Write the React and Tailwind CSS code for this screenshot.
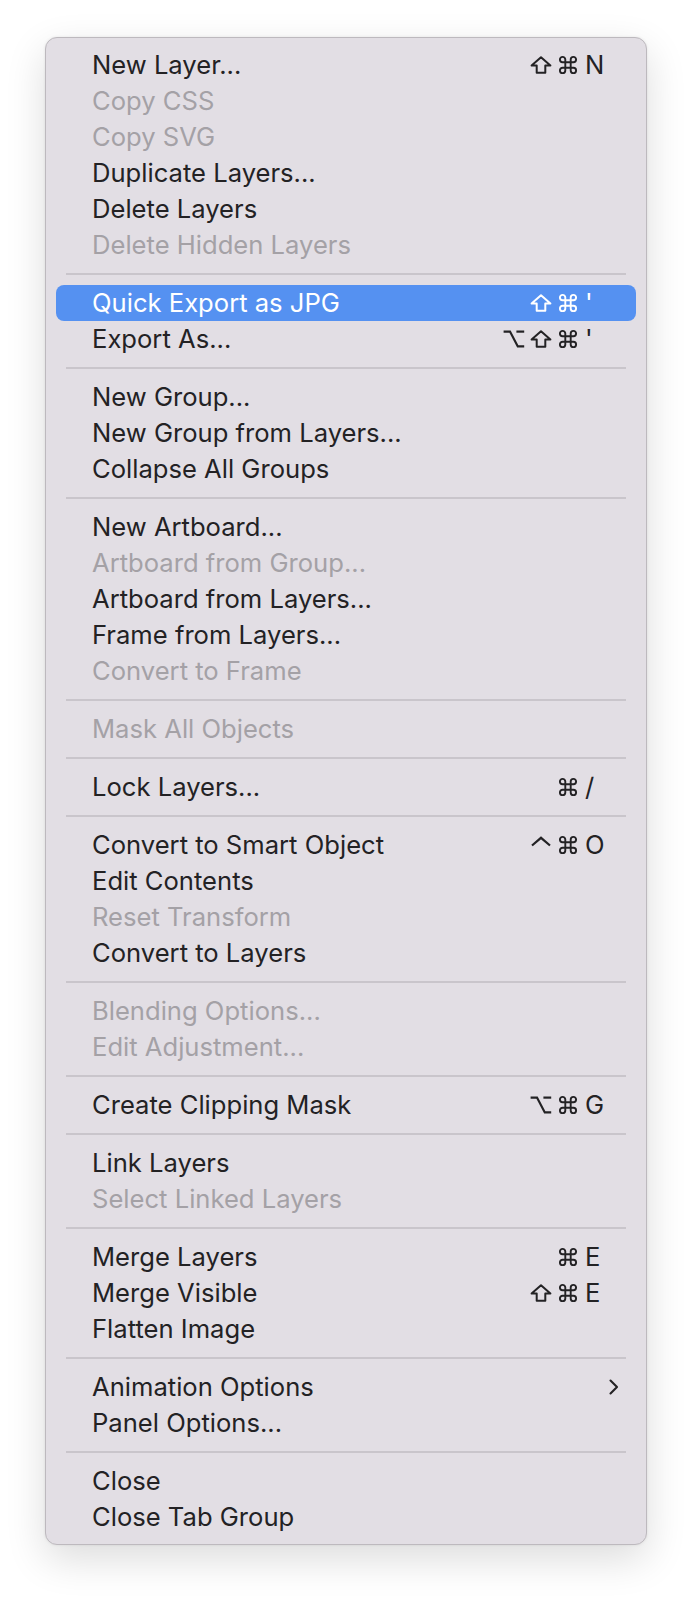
import React from "react";

function Shift() {
  return (
    <svg width="22" height="18" viewBox="0 0 22 18" fill="none" stroke="currentColor" strokeWidth="2" strokeLinejoin="round" className="overflow-visible">
      <path d="M11 1.3 L1.6 9.5 H6.7 V16.8 H15.3 V9.5 H20.4 Z" />
    </svg>
  );
}
function Cmd() {
  return (
    <svg width="22" height="18" viewBox="0 2 24 20" fill="none" stroke="currentColor" strokeWidth="2.1" className="overflow-visible">
      <path d="M15 6v12a3 3 0 1 0 3-3H6a3 3 0 1 0 3 3V6a3 3 0 1 0-3 3h12a3 3 0 1 0-3-3" />
    </svg>
  );
}
function Opt() {
  return (
    <svg width="22" height="18" viewBox="0 0 22 18" fill="none" stroke="currentColor" strokeWidth="2.2" className="overflow-visible">
      <path d="M0.6 1.6 H7 L14.8 16.4 H21.2" />
      <path d="M13.4 1.6 H21.2" />
    </svg>
  );
}
function Ctrl() {
  return (
    <svg width="22" height="18" viewBox="0 0 22 18" fill="none" stroke="currentColor" strokeWidth="2.2" className="overflow-visible">
      <path d="M2 9.5 L11 1.8 L20 9.5" />
    </svg>
  );
}
function Chevron() {
  return (
    <svg width="10" height="16" viewBox="0 0 10 16" fill="none" stroke="currentColor" strokeWidth="2.1" strokeLinecap="round" strokeLinejoin="round">
      <path d="M1.5 1.5 L8 8 L1.5 14.5" />
    </svg>
  );
}

const MOD = { shift: Shift, cmd: Cmd, opt: Opt, ctrl: Ctrl };

const groups = [
  [
    { t: "New Layer...", m: ["shift", "cmd"], k: "N" },
    { t: "Copy CSS", d: true },
    { t: "Copy SVG", d: true },
    { t: "Duplicate Layers..." },
    { t: "Delete Layers" },
    { t: "Delete Hidden Layers", d: true },
  ],
  [
    { t: "Quick Export as JPG", m: ["shift", "cmd"], k: "'", h: true },
    { t: "Export As...", m: ["opt", "shift", "cmd"], k: "'" },
  ],
  [
    { t: "New Group..." },
    { t: "New Group from Layers..." },
    { t: "Collapse All Groups" },
  ],
  [
    { t: "New Artboard..." },
    { t: "Artboard from Group...", d: true },
    { t: "Artboard from Layers..." },
    { t: "Frame from Layers..." },
    { t: "Convert to Frame", d: true },
  ],
  [{ t: "Mask All Objects", d: true }],
  [{ t: "Lock Layers...", m: ["cmd"], k: "/" }],
  [
    { t: "Convert to Smart Object", m: ["ctrl", "cmd"], k: "O" },
    { t: "Edit Contents" },
    { t: "Reset Transform", d: true },
    { t: "Convert to Layers" },
  ],
  [
    { t: "Blending Options...", d: true },
    { t: "Edit Adjustment...", d: true },
  ],
  [{ t: "Create Clipping Mask", m: ["opt", "cmd"], k: "G" }],
  [
    { t: "Link Layers" },
    { t: "Select Linked Layers", d: true },
  ],
  [
    { t: "Merge Layers", m: ["cmd"], k: "E" },
    { t: "Merge Visible", m: ["shift", "cmd"], k: "E" },
    { t: "Flatten Image" },
  ],
  [
    { t: "Animation Options", sub: true },
    { t: "Panel Options..." },
  ],
  [{ t: "Close" }, { t: "Close Tab Group" }],
];

function Item({ it }) {
  const color = it.h
    ? "bg-[#5591f1] text-white"
    : it.d
    ? "text-[#a4a1a6]"
    : "text-[#232224]";
  return (
    <div className={`h-[36px] rounded-[8px] flex items-center pl-[36px] pr-[17px] ${color}`}>
      <span className="flex-1 whitespace-nowrap">{it.t}</span>
      {it.m && (
        <div className="flex items-center gap-[5px]">
          {it.m.map((m, i) => {
            const C = MOD[m];
            return <C key={i} />;
          })}
        </div>
      )}
      {(it.m || it.sub) && (
        <div className={`w-[34px] ml-[6px] flex items-center ${it.sub ? "justify-end" : "justify-start"}`}>
          {it.sub ? <Chevron /> : <span>{it.k}</span>}
        </div>
      )}
    </div>
  );
}

export default function App() {
  return (
    <div className="min-h-[1600px] bg-white pt-[37px] pl-[45px] font-[Inter,sans-serif] text-[25.6px] leading-none">
      <div className="w-[602px] rounded-[12px] bg-[#e2dee4] border border-[#bdb9be] shadow-[0_14px_40px_rgba(0,0,0,0.14),0_0_3px_rgba(0,0,0,0.08)] pt-[9px] pb-[9px] px-[10px]">
        {groups.map((g, gi) => (
          <React.Fragment key={gi}>
            {gi > 0 && (
              <div className="h-[22px] flex items-center px-[10px]">
                <div className="h-[2px] w-full bg-[#c9c5cb]" />
              </div>
            )}
            {g.map((it, i) => (
              <Item key={i} it={it} />
            ))}
          </React.Fragment>
        ))}
      </div>
    </div>
  );
}
